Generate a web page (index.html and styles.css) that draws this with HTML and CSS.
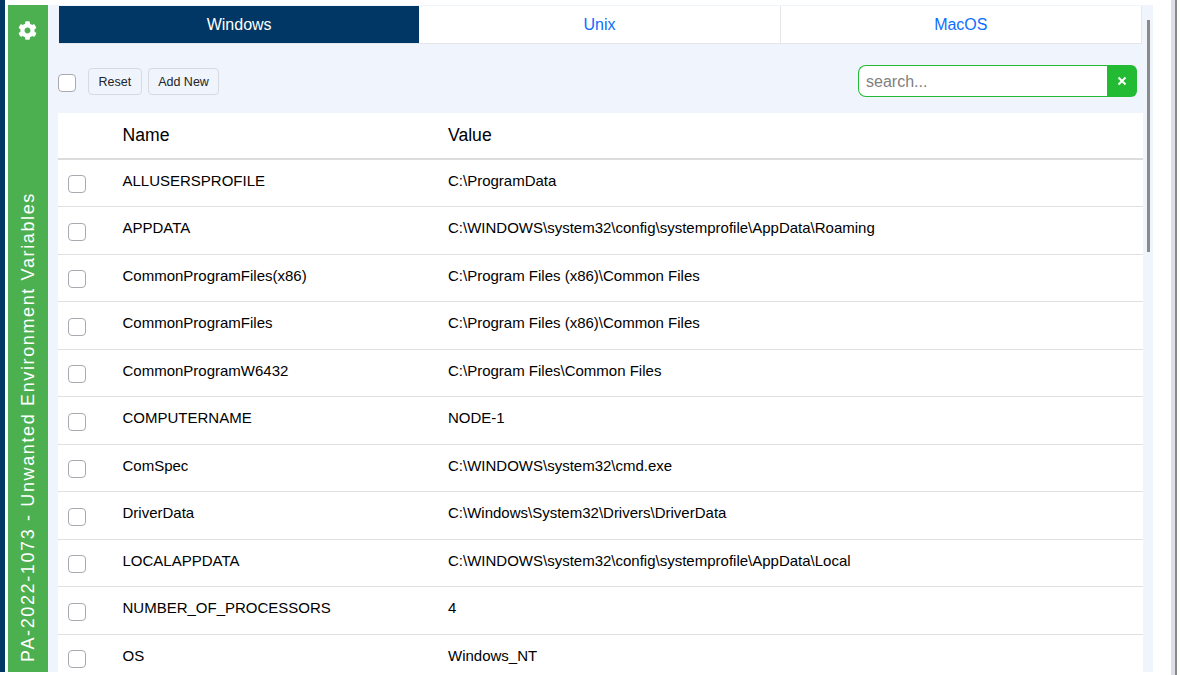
FILE: index.html
```html
<!DOCTYPE html>
<html lang="en">
<head>
    <meta charset="UTF-8">
    <title>Unwanted Environment Variables</title>
    <link rel="stylesheet" href="styles.css">
</head>
<body>
    <div class="page">
        <div class="edge"></div>
        <div class="side">
            <svg class="gear" viewBox="0 0 512 512" width="19" height="19">
                <path fill="#fff" d="M487.4 315.7l-42.6-24.6c4.3-23.2 4.3-47 0-70.2l42.6-24.6c4.9-2.8 7.1-8.6 5.5-14-11.1-35.6-30-67.8-54.7-94.6-3.8-4.1-10-5.1-14.8-2.3L380.8 110c-17.9-15.4-38.5-27.3-60.8-35.1V25.8c0-5.6-3.9-10.5-9.4-11.7-36.7-8.2-74.3-7.8-109.2 0-5.5 1.2-9.4 6.1-9.4 11.7V75c-22.2 7.9-42.8 19.8-60.8 35.1L88.7 85.5c-4.9-2.8-11-1.9-14.8 2.3-24.7 26.7-43.6 58.9-54.7 94.6-1.7 5.4.6 11.2 5.5 14L67.3 221c-4.3 23.2-4.3 47 0 70.2l-42.6 24.6c-4.9 2.8-7.1 8.6-5.5 14 11.1 35.6 30 67.8 54.7 94.6 3.8 4.1 10 5.1 14.8 2.3l42.6-24.6c17.9 15.4 38.5 27.3 60.8 35.1v49.2c0 5.6 3.9 10.5 9.4 11.7 36.7 8.2 74.3 7.8 109.2 0 5.5-1.2 9.4-6.1 9.4-11.7v-49.2c22.2-7.9 42.8-19.8 60.8-35.1l42.6 24.6c4.9 2.8 11 1.9 14.8-2.3 24.7-26.7 43.6-58.9 54.7-94.6 1.5-5.5-.7-11.3-5.6-14.1zM256 336c-44.1 0-80-35.9-80-80s35.9-80 80-80 80 35.9 80 80-35.9 80-80 80z"/>
            </svg>
            <div class="side-title">PA-2022-1073 - Unwanted Environment Variables</div>
        </div>
        <div class="panel">
            <div class="tabs">
                <div class="tab active">Windows</div>
                <div class="tab">Unix</div>
                <div class="tab">MacOS</div>
            </div>
            <div class="toolbar">
                <span class="check"></span>
                <button class="btn">Reset</button>
                <button class="btn">Add New</button>
                <div class="search">
                    <input class="search-input" type="text" placeholder="search...">
                    <span class="search-clear">
                        <svg viewBox="0 0 10 10" width="10" height="10">
                            <path d="M1.5 1.5l7 7M8.5 1.5l-7 7" stroke="#fff" stroke-width="2" fill="none"/>
                        </svg>
                    </span>
                </div>
            </div>
            <div class="table">
                <div class="row head">
                    <div></div>
                    <div>Name</div>
                    <div>Value</div>
                </div>
                <div class="row"><div><span class="check"></span></div><div>ALLUSERSPROFILE</div><div>C:\ProgramData</div></div>
                <div class="row"><div><span class="check"></span></div><div>APPDATA</div><div>C:\WINDOWS\system32\config\systemprofile\AppData\Roaming</div></div>
                <div class="row"><div><span class="check"></span></div><div>CommonProgramFiles(x86)</div><div>C:\Program Files (x86)\Common Files</div></div>
                <div class="row"><div><span class="check"></span></div><div>CommonProgramFiles</div><div>C:\Program Files (x86)\Common Files</div></div>
                <div class="row"><div><span class="check"></span></div><div>CommonProgramW6432</div><div>C:\Program Files\Common Files</div></div>
                <div class="row"><div><span class="check"></span></div><div>COMPUTERNAME</div><div>NODE-1</div></div>
                <div class="row"><div><span class="check"></span></div><div>ComSpec</div><div>C:\WINDOWS\system32\cmd.exe</div></div>
                <div class="row"><div><span class="check"></span></div><div>DriverData</div><div>C:\Windows\System32\Drivers\DriverData</div></div>
                <div class="row"><div><span class="check"></span></div><div>LOCALAPPDATA</div><div>C:\WINDOWS\system32\config\systemprofile\AppData\Local</div></div>
                <div class="row"><div><span class="check"></span></div><div>NUMBER_OF_PROCESSORS</div><div>4</div></div>
                <div class="row"><div><span class="check"></span></div><div>OS</div><div>Windows_NT</div></div>
            </div>
            <div class="thumb"></div>
        </div>
        <div class="gutter">
            <div class="outer-thumb"></div>
        </div>
    </div>
</body>
</html>
```

FILE: styles.css
```css
html, body {
    margin: 0;
    height: 100%;
    overflow: hidden;
    background-color: #fff;
    font-family: "Liberation Sans", Arial, sans-serif;
    color: #000;
}

.page {
    display: flex;
    height: 675px;
}

.edge {
    width: 5px;
    margin-right: 3px;
    height: 672px;
    background-color: #003764;
}

.side {
    width: 40px;
    height: 667px;
    margin-top: 5px;
    background-color: #4caf50;
    display: flex;
    flex-direction: column;
    align-items: center;
    justify-content: space-between;
    padding: 16px 0 10px;
    box-sizing: border-box;
    flex-shrink: 0;
}

.gear {
    margin-right: 1px;
}

.side-title {
    writing-mode: vertical-rl;
    transform: rotate(180deg);
    color: #fff;
    font-size: 18px;
    letter-spacing: 1.63px;
    white-space: nowrap;
}

.panel {
    position: relative;
    width: 1105px;
    height: 667px;
    margin-top: 5px;
    padding-left: 10px;
    box-sizing: border-box;
    background-color: #f0f4fc;
    flex-shrink: 0;
    overflow: hidden;
}

.tabs {
    display: flex;
    width: 1083px;
    margin-left: 1px;
    margin-top: 1px;
    height: 38px;
    box-sizing: border-box;
    background-color: #fff;
    border-bottom: 1px solid #e4e6ea;
}

.tab {
    flex: 1;
    display: flex;
    align-items: center;
    justify-content: center;
    font-size: 16px;
    color: #0d6efd;
    border-right: 1px solid #e4e6ea;
}

.tab.active {
    background-color: #003764;
    color: #fff;
    border-right: none;
}

.toolbar {
    display: flex;
    align-items: center;
    gap: 6px;
    height: 69px;
    padding-top: 6px;
    padding-right: 16px;
    box-sizing: border-box;
}

.check {
    display: inline-block;
    width: 16px;
    height: 16px;
    border: 1px solid #a9a9b2;
    border-radius: 4px;
    background-color: #fff;
}

.toolbar .check {
    margin-right: 6px;
    margin-top: 2px;
}

.btn {
    height: 27px;
    padding: 0 9.5px;
    font-family: "Liberation Sans", Arial, sans-serif;
    font-size: 12.5px;
    color: #212529;
    background-color: #f0f4fc;
    border: 1px solid #d8dadf;
    border-radius: 4px;
}

.search {
    display: flex;
    margin-left: auto;
    margin-bottom: 2px;
    height: 32px;
}

.search-input {
    width: 249px;
    box-sizing: border-box;
    padding: 2px 7px 0;
    border: 1px solid #22bb33;
    border-right: none;
    border-radius: 8px 0 0 8px;
    font-family: "Liberation Sans", Arial, sans-serif;
    font-size: 16px;
    outline: none;
}

.search-input::placeholder {
    color: #808080;
}

.search-clear {
    width: 30px;
    display: flex;
    align-items: center;
    justify-content: center;
    background-color: #22bb33;
    border-radius: 0 6px 6px 0;
}

.table {
    width: 1085px;
    background-color: #fff;
}

.row {
    display: grid;
    grid-template-columns: 64.5px 325.5px 1fr;
    align-items: center;
    height: 47.5px;
    padding-bottom: 4.6px;
    box-sizing: border-box;
    border-bottom: 1px solid #e0e0e3;
    font-size: 15px;
}

.row .check {
    display: block;
    margin: 7.6px 0 0 10px;
}

.row.head {
    height: 46.5px;
    padding-bottom: 0;
    font-size: 17.6px;
    border-bottom: 2px solid #dcdcdc;
}

.thumb {
    position: absolute;
    left: 1099px;
    top: 15px;
    width: 3px;
    height: 232px;
    background-color: #8a8a8a;
}

.gutter {
    position: relative;
    flex: 1;
}

.outer-thumb {
    position: absolute;
    top: 0;
    bottom: 0;
    right: 3px;
    width: 2px;
    background-color: #8a8a8a;
    border-left: 4px solid #dcdfe6;
}
```
